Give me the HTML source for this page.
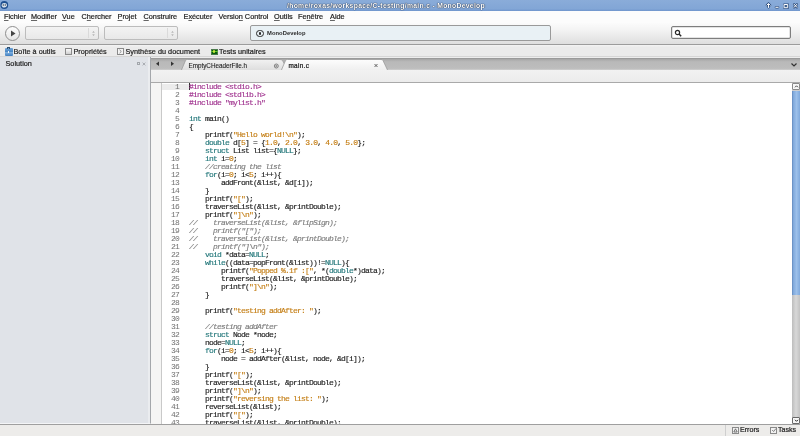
<!DOCTYPE html>
<html><head><meta charset="utf-8">
<style>
*{margin:0;padding:0;box-sizing:border-box}
html,body{width:800px;height:436px;overflow:hidden;background:#ededed;will-change:transform;font-family:"Liberation Sans",sans-serif;color:#2e2e2e}
.abs{position:absolute}
#title{left:0;top:0;width:800px;height:10.5px;background:linear-gradient(#8aacd9,#82a6d6 80%,#6f95cc);}
#title .t{left:287px;width:220px;top:1px;height:10px;white-space:nowrap;font-size:6.8px;font-weight:bold;line-height:10px;color:#fff;text-shadow:0 0 1px #1e2f4a,0 0 1px #1e2f4a,0 0 0.5px #1e2f4a;letter-spacing:0.3px}
#menu{left:0;top:10.5px;width:800px;height:12.5px;background:#fcfcfc}
#menu span{position:absolute;top:-1px;font-size:7.3px;line-height:13px;color:#222;-webkit-text-stroke:0.2px #222}
#menu u{text-decoration:underline;text-decoration-thickness:0.7px;text-underline-offset:0.5px;text-decoration-color:#666;text-decoration-skip-ink:none}
#toolbar{left:0;top:23px;width:800px;height:22px;background:linear-gradient(#fbfbfb,#f3f3f3 35%,#dedede);border-bottom:1px solid #9c9c9c}
#pads{left:0;top:45px;width:800px;height:12px;background:linear-gradient(#f4f4f4,#ebebeb 20%,#ebebeb);border-bottom:1px solid #d6d6d6}
#pads span{position:absolute;top:1px;font-size:7.3px;line-height:12px;color:#222;-webkit-text-stroke:0.2px #222}
#left{left:0;top:57px;width:151px;height:367px;background:#e0e3e8;border-right:1px solid #a4a7ab;border-bottom:1px solid #f4f5f7;box-shadow:inset -2px 0 0 #eaecef}
#tabbar{left:151px;top:57.5px;width:649px;height:12.5px;background:linear-gradient(#a6a6a6,#b9b9b9 25%,#bdbdbd 85%,#cfcfcf);border-top:1px solid #9a9a9a}
#crumb{left:151px;top:70px;width:649px;height:13px;background:linear-gradient(#f2f2f2,#ececec);border-bottom:1px solid #a9a9a9}
#editor{left:151px;top:83px;width:641px;height:341px;background:#fff;overflow:hidden}
#gutter1{left:0;top:0;width:11px;height:341px;background:#f5f5f4;border-right:1px solid #c9c9c9}
#code{left:38px;top:0;-webkit-text-stroke-width:0.15px;font-family:"Liberation Mono",monospace;font-size:8px;letter-spacing:-0.8007px;line-height:8px;white-space:pre;color:#222}
#nums{left:10px;top:0;width:18px;text-align:right;font-family:"Liberation Mono",monospace;font-size:8px;letter-spacing:-0.8007px;line-height:8px;white-space:pre;color:#707070}
.k{color:#23777a}.n{color:#c47c10}.s{color:#c47e14}.c{color:#7d7d7d;font-style:italic}.p{color:#a0338f}
.combo{border:1px solid #bcbcbc;border-radius:2px;background:linear-gradient(#f3f3f3,#e8e8e8)}
.sp{position:absolute;top:1px;width:1px;height:10px;background:#dadada}
#scroll{left:792px;top:83px;width:8px;height:341px;background:#cfcfcf}
#status{left:0;top:424px;width:800px;height:12px;background:#edecea;border-top:1px solid #9f9f9f}
</style></head><body>
<div id="title" class="abs"><div class="t abs">/home/roxas/workspace/C-testing/main.c - MonoDevelop</div>
<svg class="abs" style="left:0;top:0" width="800" height="11" viewBox="0 0 800 11">
<circle cx="4.3" cy="5" r="3.9" fill="#1f4f8f"/>
<ellipse cx="4.3" cy="5.2" rx="2.6" ry="2.3" fill="#d8e2ec"/>
<circle cx="3.3" cy="5" r="0.7" fill="#345"/><circle cx="5.3" cy="5" r="0.7" fill="#345"/>
<g stroke="#2b4a78" stroke-width="2.2" stroke-linecap="round" fill="none">
<path d="M768.5 7.5 L768.5 4.2 M766.8 5.2 L768.5 3.5 L770.2 5.2"/>
<path d="M775.8 7.3 L778.2 7.3"/>
<path d="M784.5 4.5 h3.2 v3.2 h-3.2 z"/>
<path d="M794 4.2 L797 7.4 M797 4.2 L794 7.4"/>
</g>
<g stroke="#fff" stroke-width="1" stroke-linecap="round" fill="none">
<path d="M768.5 7.5 L768.5 4.2 M766.8 5.2 L768.5 3.5 L770.2 5.2"/>
<path d="M775.8 7.3 L778.2 7.3"/>
<path d="M784.5 4.5 h3.2 v3.2 h-3.2 z"/>
<path d="M794 4.2 L797 7.4 M797 4.2 L794 7.4"/>
</g>
</svg>
</div>
<div id="menu" class="abs">
<span style="left:4px"><u>F</u>ichier</span><span style="left:31px"><u>M</u>odifier</span><span style="left:62px"><u>V</u>ue</span><span style="left:81.5px">C<u>h</u>ercher</span><span style="left:117.5px"><u>P</u>rojet</span><span style="left:143.5px"><u>C</u>onstruire</span><span style="left:183.5px">E<u>x</u>écuter</span><span style="left:218.5px">Versio<u>n</u> Control</span><span style="left:274px"><u>O</u>utils</span><span style="left:298px">Fe<u>n</u>être</span><span style="left:330px"><u>A</u>ide</span>
</div>
<div id="toolbar" class="abs">
<div class="abs" style="left:5px;top:2.5px;width:15px;height:15px;border-radius:50%;border:1px solid #8e8e8e;background:linear-gradient(#fdfdfd,#e6e6e6)"></div>
<svg class="abs" style="left:9px;top:6px" width="8" height="9" viewBox="0 0 8 9"><path d="M2 1.5 L6.5 4.5 L2 7.5 Z" fill="#444"/></svg>
<div class="abs combo" style="left:25px;top:3px;width:74px;height:14px"><div class="sp" style="left:62px"></div><svg class="abs" style="left:64px;top:2px" width="7" height="9" viewBox="0 0 7 9"><path d="M2.2 3.6 L3.5 2.2 L4.8 3.6 Z M2.2 5.4 L3.5 6.8 L4.8 5.4 Z" fill="#9a9a9a"/></svg></div>
<div class="abs combo" style="left:104px;top:3px;width:74px;height:14px"><div class="sp" style="left:62px"></div><svg class="abs" style="left:64px;top:2px" width="7" height="9" viewBox="0 0 7 9"><path d="M2.2 3.6 L3.5 2.2 L4.8 3.6 Z M2.2 5.4 L3.5 6.8 L4.8 5.4 Z" fill="#9a9a9a"/></svg></div>
<div class="abs" style="left:250px;top:2px;width:301px;height:16px;border:1px solid #9a9a9a;border-radius:2px;background:#e9f1f5"></div>
<div class="abs" style="left:256px;top:6.5px;width:7.5px;height:7.5px;border-radius:50%;border:1.3px solid #2a2a2a"></div>
<div class="abs" style="left:258.5px;top:9px;width:2.5px;height:2.5px;border-radius:50%;background:#2a2a2a"></div>
<span class="abs" style="left:267px;top:2px;line-height:16px;font-size:5.8px;color:#2a2a2a;letter-spacing:0.05px;font-weight:bold">MonoDevelop</span>
<div class="abs" style="left:671px;top:3px;width:120px;height:13px;border:1px solid #7e7e7e;border-radius:2px;background:#fff;box-shadow:inset 0 0 0 0.5px #c8c8c8"></div>
<svg class="abs" style="left:673.5px;top:5.5px" width="9" height="9" viewBox="0 0 9 9"><circle cx="3.5" cy="3.5" r="2.1" fill="none" stroke="#2a2a2a" stroke-width="1.2"/><path d="M5 5 L7.2 7.2" stroke="#2a2a2a" stroke-width="1.5"/></svg>
</div>
<div id="pads" class="abs">
<div class="abs" style="left:4.5px;top:3px;width:8px;height:7.5px;border-radius:1px;background:linear-gradient(#6fa3d6,#4a88c6 45%,#7fb0de 55%,#3f7dbf)"></div>
<div class="abs" style="left:7px;top:1.8px;width:3px;height:1.8px;border:0.9px solid #2d4f70;border-bottom:none"></div>
<div class="abs" style="left:7.7px;top:5.8px;width:1.8px;height:1.8px;background:#f4f8fc"></div>
<span style="left:13.5px">Boîte à outils</span>
<div class="abs" style="left:65px;top:3px;width:7px;height:7px;border:1px solid #8a8a8a;background:linear-gradient(#fafafa,#cfcfcf)"></div>
<span style="left:73.5px">Propriétés</span>
<div class="abs" style="left:117px;top:3px;width:6.5px;height:7px;border:1px solid #8a8a8a;background:#f4f4f4"></div>
<svg class="abs" style="left:118px;top:4px" width="5" height="5" viewBox="0 0 5 5"><path d="M1.5 0.8 L3.3 2.5 L1.5 4.2" fill="none" stroke="#777" stroke-width="0.8"/></svg>
<span style="left:125.5px">Synthèse du document</span>
<div class="abs" style="left:210.5px;top:3.5px;width:7px;height:6px;background:#0b5f0b;border:0.5px solid #4a7a4a"></div>
<div class="abs" style="left:210.5px;top:5.8px;width:7px;height:1.6px;background:#5fc030"></div>
<div class="abs" style="left:212.8px;top:5.2px;width:2.6px;height:2.6px;border-radius:50%;background:#c8e840"></div>
<span style="left:219px">Tests unitaires</span>
</div>
<div id="left" class="abs">
<span class="abs" style="left:5.5px;top:0;line-height:13px;font-size:7.3px;color:#222;-webkit-text-stroke:0.2px #222">Solution</span>
<div class="abs" style="left:136.5px;top:4.8px;width:3.5px;height:3.5px;border:0.8px solid #a2a6ab"></div>
<svg class="abs" style="left:142px;top:4.5px" width="4" height="4" viewBox="0 0 4 4"><path d="M0.6 0.6 L3.4 3.4 M3.4 0.6 L0.6 3.4" stroke="#9da1a6" stroke-width="0.8"/></svg>
</div>
<div id="tabbar" class="abs">
<svg class="abs" style="left:0;top:0" width="649" height="12" viewBox="0 0 649 12">
<path d="M8 2.5 L5 4.7 L8 6.9 Z" fill="#333"/>
<path d="M20 2.5 L23 4.7 L20 6.9 Z" fill="#333"/>
<path d="M30 12 L34.5 1.5 Q35.2 0.5 36.5 0.5 L129 0.5 Q130.5 0.5 131.5 1.5 L134 6 L134 12 Z" fill="url(#g1)" stroke="#9a9a9a" stroke-width="0.8"/>
<path d="M130 12 L134.5 1.5 Q135.2 0.5 136.5 0.5 L230 0.5 Q231.5 0.5 232 1.5 L237 12 Z" fill="url(#g2)" stroke="#9a9a9a" stroke-width="0.8"/>
<defs><linearGradient id="g1" x1="0" y1="0" x2="0" y2="1"><stop offset="0" stop-color="#f2f2f2"/><stop offset="1" stop-color="#dcdcdc"/></linearGradient>
<linearGradient id="g2" x1="0" y1="0" x2="0" y2="1"><stop offset="0" stop-color="#fdfdfd"/><stop offset="1" stop-color="#eeeeee"/></linearGradient></defs>
<circle cx="125.3" cy="7" r="2" fill="none" stroke="#6a6a6a" stroke-width="0.8"/><path d="M124.2 7 h2.2 M125.3 5.9 v2.2" stroke="#6a6a6a" stroke-width="0.6"/>
<path d="M223.5 5 L226.5 8 M226.5 5 L223.5 8" stroke="#444" stroke-width="0.8"/>
<path d="M640.5 4.5 L643 7 L645.5 4.5" fill="none" stroke="#333" stroke-width="1.2"/>
</svg>
<span class="abs" style="left:37.5px;top:1px;line-height:12px;font-size:6.3px;color:#222;-webkit-text-stroke:0.1px #222">EmptyCHeaderFile.h</span>
<span class="abs" style="left:137.5px;top:1px;line-height:12px;font-size:6.4px;color:#111;letter-spacing:0.3px;-webkit-text-stroke:0.2px #111">main.c</span>
</div>
<div id="crumb" class="abs"></div>
<div id="editor" class="abs">
<div id="gutter1" class="abs"></div>
<div class="abs" style="left:11px;top:0.5px;width:26.5px;height:6.5px;background:#ececec"></div>
<div class="abs" style="left:38px;top:0;width:0.9px;height:7px;background:#333"></div>
<div id="nums" class="abs">1
2
3
4
5
6
7
8
9
10
11
12
13
14
15
16
17
18
19
20
21
22
23
24
25
26
27
28
29
30
31
32
33
34
35
36
37
38
39
40
41
42
43</div>
<div id="code" class="abs"><span class="p">#include &lt;stdio.h&gt;</span>
<span class="p">#include &lt;stdlib.h&gt;</span>
<span class="p">#include &quot;mylist.h&quot;</span>

<span class="k">int</span> main()
{
    printf(<span class="s">&quot;Hello world!\n&quot;</span>);
    <span class="k">double</span> d[<span class="n">5</span>] = {<span class="n">1.0</span>, <span class="n">2.0</span>, <span class="n">3.0</span>, <span class="n">4.0</span>, <span class="n">5.0</span>};
    <span class="k">struct</span> List list={<span class="k">NULL</span>};
    <span class="k">int</span> i=<span class="n">0</span>;
    <span class="c">//creating the list</span>
    <span class="k">for</span>(i=<span class="n">0</span>; i&lt;<span class="n">5</span>; i++){
        addFront(&amp;list, &amp;d[i]);
    }
    printf(<span class="s">&quot;[&quot;</span>);
    traverseList(&amp;list, &amp;printDouble);
    printf(<span class="s">&quot;]\n&quot;</span>);
<span class="c">//    traverseList(&amp;list, &amp;flipSign);</span>
<span class="c">//    printf(&quot;[&quot;);</span>
<span class="c">//    traverseList(&amp;list, &amp;printDouble);</span>
<span class="c">//    printf(&quot;]\n&quot;);</span>
    <span class="k">void</span> *data=<span class="k">NULL</span>;
    <span class="k">while</span>((data=popFront(&amp;list))!=<span class="k">NULL</span>){
        printf(<span class="s">&quot;Popped %.1f :[&quot;</span>, *(<span class="k">double</span>*)data);
        traverseList(&amp;list, &amp;printDouble);
        printf(<span class="s">&quot;]\n&quot;</span>);
    }

    printf(<span class="s">&quot;testing addAfter: &quot;</span>);

    <span class="c">//testing addAfter</span>
    <span class="k">struct</span> Node *node;
    node=<span class="k">NULL</span>;
    <span class="k">for</span>(i=<span class="n">0</span>; i&lt;<span class="n">5</span>; i++){
        node = addAfter(&amp;list, node, &amp;d[i]);
    }
    printf(<span class="s">&quot;[&quot;</span>);
    traverseList(&amp;list, &amp;printDouble);
    printf(<span class="s">&quot;]\n&quot;</span>);
    printf(<span class="s">&quot;reversing the list: &quot;</span>);
    reverseList(&amp;list);
    printf(<span class="s">&quot;[&quot;</span>);
    traverseList(&amp;list, &amp;printDouble);</div>
</div>
<div id="scroll" class="abs">
<div class="abs" style="left:0;top:0;width:8px;height:7px;background:#f7f7f7;border:1px solid #8a8a8a;border-radius:1px"></div>
<svg class="abs" style="left:1.5px;top:1px" width="5" height="5" viewBox="0 0 5 5"><path d="M1 3.3 L2.5 1.8 L4 3.3" fill="none" stroke="#333" stroke-width="0.9"/></svg>
<div class="abs" style="left:0;top:7.5px;width:8px;height:204px;background:linear-gradient(90deg,#7da6da,#9cc0ea 50%,#80a9dc);border-left:1px solid #6d94c6"></div>
<div class="abs" style="left:0;top:211.5px;width:8px;height:123px;background:linear-gradient(90deg,#bdbdbd,#d8d8d8 50%,#c2c2c2)"></div>
<div class="abs" style="left:0;top:334px;width:8px;height:7px;background:#f7f7f7;border:1px solid #6a6a6a;border-radius:1px"></div>
<svg class="abs" style="left:1.5px;top:335px" width="5" height="5" viewBox="0 0 5 5"><path d="M1 1.8 L2.5 3.3 L4 1.8" fill="none" stroke="#222" stroke-width="1"/></svg>
</div>
<div id="status" class="abs">
<div class="abs" style="left:725px;top:0;width:1px;height:12px;background:#cfcfcf"></div>
<div class="abs" style="left:732px;top:1.5px;width:7px;height:7px;border:1px solid #8a8a8a;background:#f2f2f2"></div>
<svg class="abs" style="left:732px;top:1.5px" width="7" height="7" viewBox="0 0 7 7"><path d="M3.5 1.8 L5.2 5 L1.8 5 Z" fill="none" stroke="#555" stroke-width="0.8"/></svg>
<span class="abs" style="left:740px;top:-0.5px;line-height:11px;font-size:7.1px;color:#222;-webkit-text-stroke:0.2px #222">Errors</span>
<div class="abs" style="left:770px;top:1.5px;width:7px;height:7px;border:1px solid #8a8a8a;background:#f2f2f2"></div>
<svg class="abs" style="left:770.5px;top:2px" width="6" height="6" viewBox="0 0 6 6"><path d="M1.2 3 L2.6 4.5 L5 1.5" fill="none" stroke="#666" stroke-width="0.8"/></svg>
<span class="abs" style="left:778px;top:-0.5px;line-height:11px;font-size:7.1px;color:#222;-webkit-text-stroke:0.2px #222">Tasks</span>
</div>
</body></html>
